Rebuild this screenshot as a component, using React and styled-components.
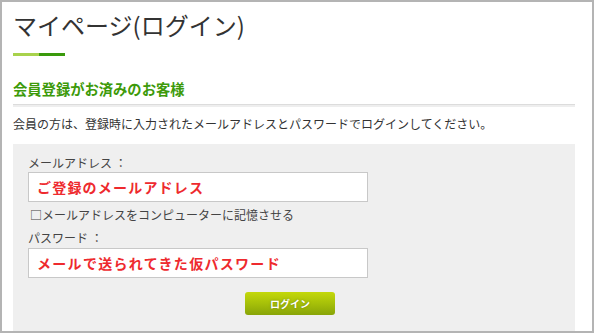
import React from 'react';
import styled, {createGlobalStyle} from 'styled-components';

const GlobalStyle = createGlobalStyle`
	html, body {
		margin: 0;
		padding: 0;
		background: #fff;
	}
	body {
		font-family: 'Noto Sans CJK JP', 'Noto Sans', sans-serif;
		color: #333;
	}
`

const Frame = styled.div`
	box-sizing: border-box;
	width: 594px;
	height: 333px;
	border: 2px solid #b4b4b4;
	padding: 0 17px 0 11px;
	overflow: hidden;
	background: #fff;
`

const Title = styled.h1`
	margin: 0;
	padding-top: 6px;
	font-size: 24px;
	line-height: 34px;
	font-weight: 400;
	color: #333;
`

const TitleBar = styled.div`
	margin-top: 11px;
	width: 52px;
	height: 3px;
	background: linear-gradient(90deg, #a8d24c 50%, #3a9a0c 50%);
`

const Heading = styled.h2`
	margin: 23px 0 0;
	font-size: 14.3px;
	line-height: 20px;
	font-weight: 700;
	color: #3d9a0a;
`

const Divider = styled.div`
	margin-top: 5px;
	height: 0;
	border-top: 1px solid #dcdcdc;
	border-bottom: 2px solid #eeeeee;
`

const Lead = styled.p`
	margin: 7px 0 0;
	font-size: 12px;
	line-height: 20px;
	color: #333;
`

const Panel = styled.div`
	margin-top: 10px;
	padding: 10px 15px 20px;
	background: #efefef;
`

const Label = styled.div`
	margin-top: ${p => p.$gap || 0}px;
	padding-left: ${p => p.$indent || 0}px;
	font-size: 12px;
	line-height: 18px;
	color: #444;
`

const Field = styled.div`
	box-sizing: border-box;
	margin-top: ${p => p.$gap || 0}px;
	width: 340px;
	height: 30px;
	display: flex;
	align-items: center;
	padding-left: 8px;
	background: #fff;
	border: 1px solid #c8c8c8;
	font-size: 14px;
	font-weight: 700;
	letter-spacing: ${p => p.$spacing}px;
	color: #ee2a2e;
	white-space: nowrap;
`

const ButtonRow = styled.div`
	margin-top: 11px;
	padding-left: 217px;
`

const LoginButton = styled.button`
	width: 90px;
	height: 23px;
	padding: 0;
	border: none;
	border-radius: 3px;
	background: linear-gradient(180deg, #c4d80a 0%, #a6c009 50%, #88a408 100%);
	color: #fff;
	font-family: 'Noto Sans CJK JP', sans-serif;
	font-size: 10px;
	font-weight: 700;
	text-shadow: 0 0 2px rgba(80, 90, 0, .6);
	cursor: pointer;
`

const App = () => {
	return(
		<Frame>
			<GlobalStyle />
			<Title>マイページ(ログイン)</Title>
			<TitleBar />
			<Heading>会員登録がお済みのお客様</Heading>
			<Divider />
			<Lead>会員の方は、登録時に入力されたメールアドレスとパスワードでログインしてください。</Lead>
			<Panel>
				<Label>メールアドレス ：</Label>
				<Field $spacing={1.2}>ご登録のメールアドレス</Field>
				<Label $gap={4} $indent={2}>□メールアドレスをコンピューターに記憶させる</Label>
				<Label $gap={5}>パスワード ：</Label>
				<Field $gap={1} $spacing={1.3}>メールで送られてきた仮パスワード</Field>
				<ButtonRow>
					<LoginButton>ログイン</LoginButton>
				</ButtonRow>
			</Panel>
		</Frame>
	)
}

export default App
